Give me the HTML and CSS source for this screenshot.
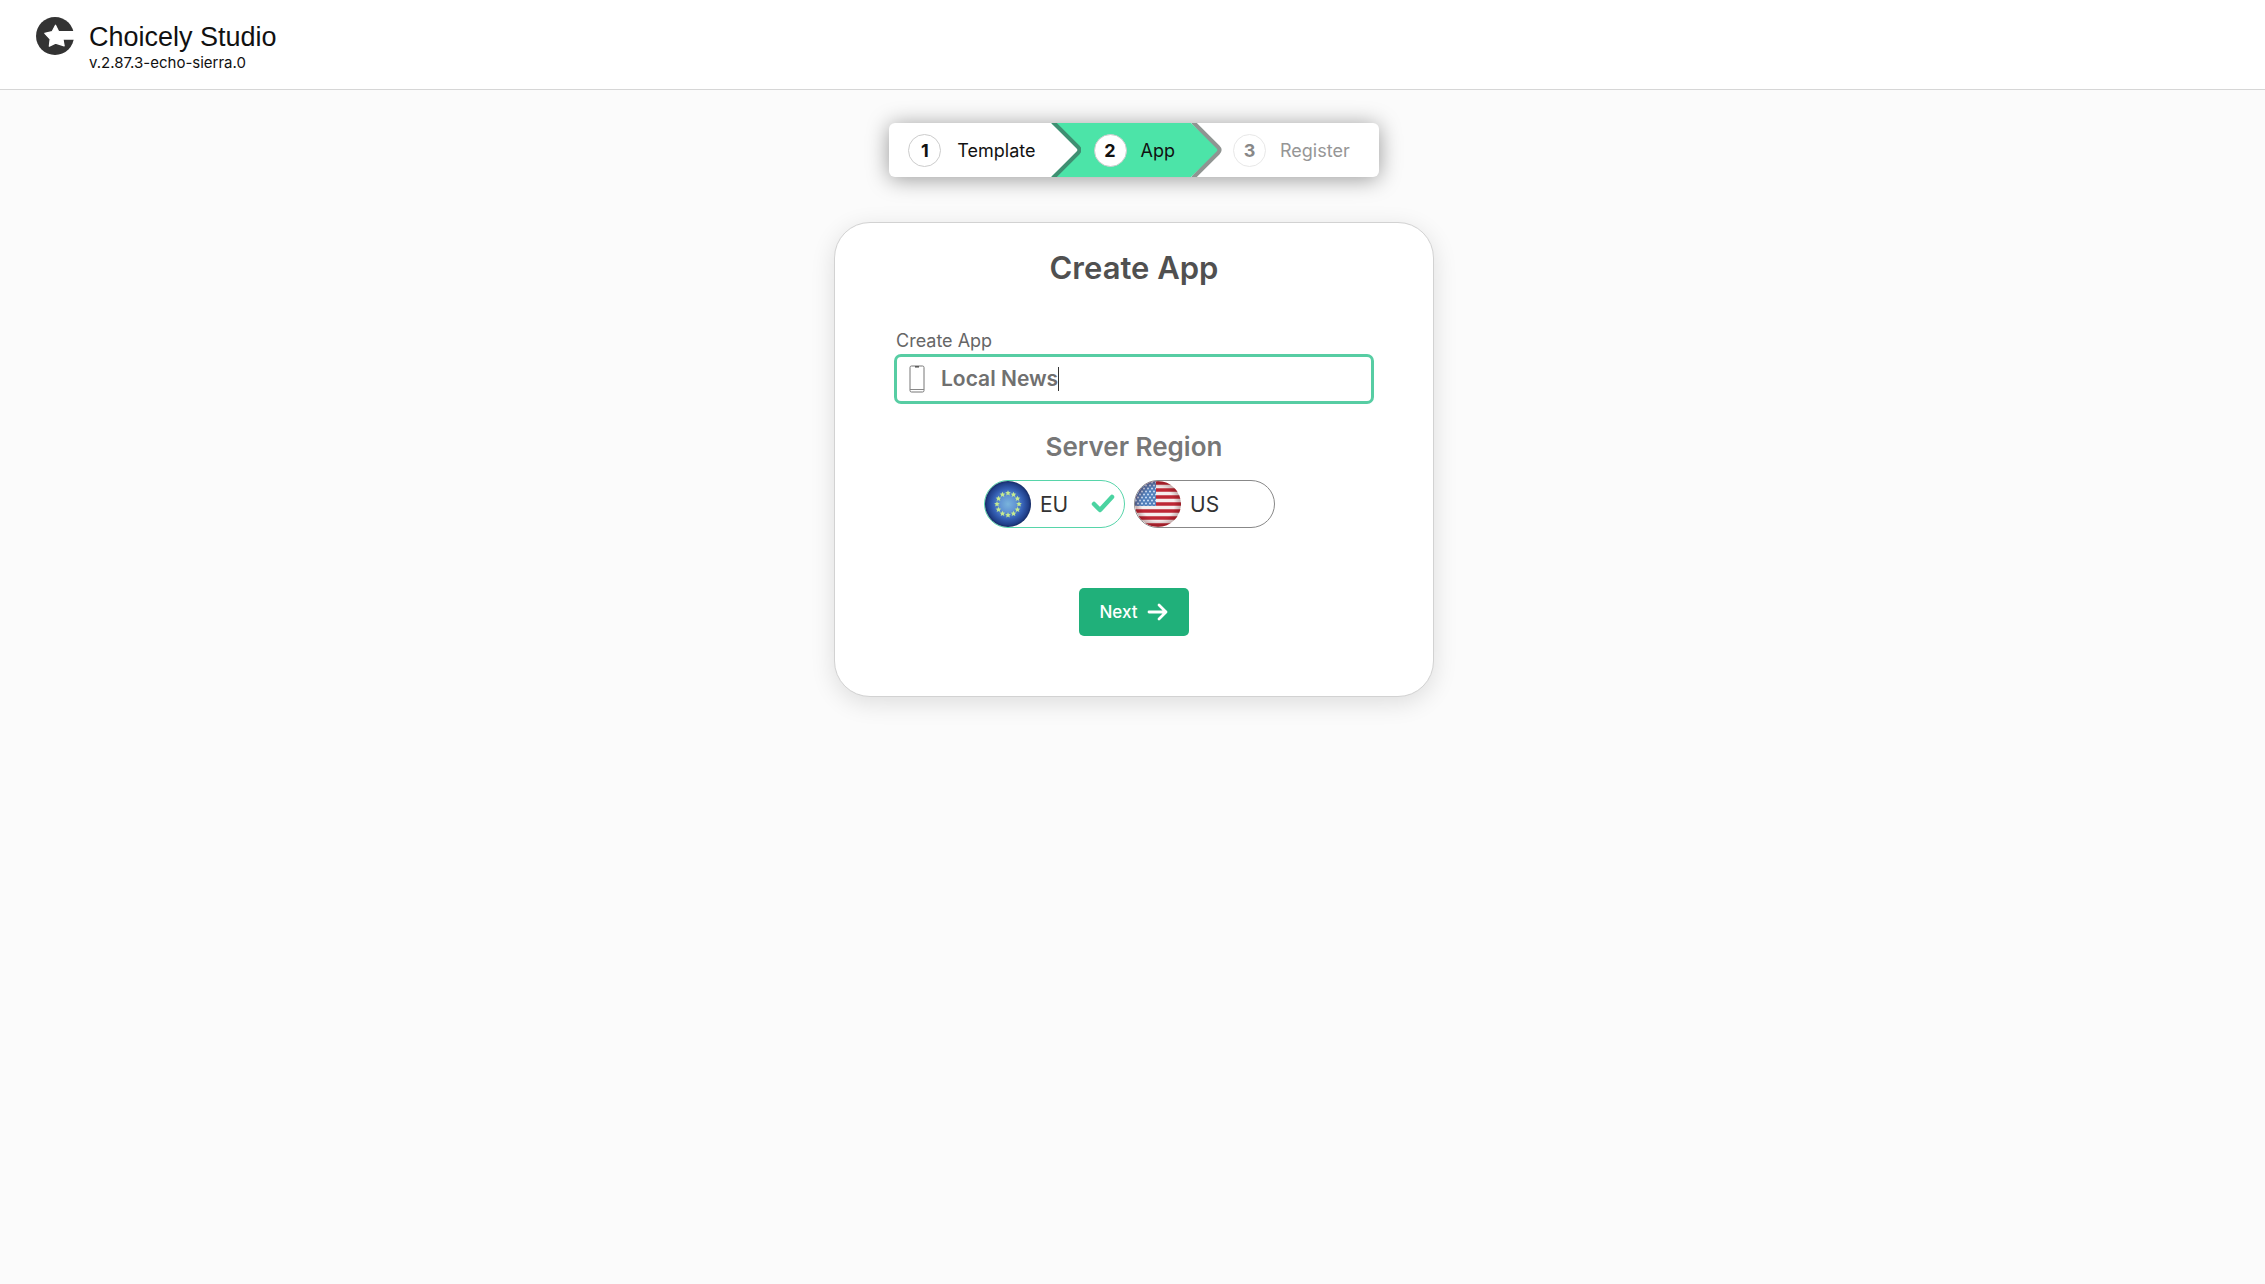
FILE: index.html
```html
<!DOCTYPE html>
<html lang="en">
<head>
  <meta charset="UTF-8">
  <meta name="viewport" content="width=device-width, initial-scale=1.0">
  <title>Choicely Studio</title>
  <link rel="stylesheet" href="styles.css">
</head>
<body>
  <header class="topbar">
    <svg class="logo" viewBox="0 0 37 37" aria-hidden="true">
      <circle cx="18.500" cy="18.500" r="18.500" fill="#333"/>
      <path d="M19 8l3 6.200H37v7.300H26.200l1.200 6.600-8.400-2.700-6 3 .800-7-5.200-5.600 7.200-1.600z" fill="#fff" stroke="#fff" stroke-width="1.200" stroke-linejoin="round"/>
    </svg>
    <div class="brand">
      <div class="brand-name">Choicely Studio</div>
      <div class="version">v.2.87.3-echo-sierra.0</div>
    </div>
  </header>

  <main>
    <ol class="steps">
      <li class="step">
        <span class="step-number">1</span>
        <span>Template</span>
      </li>
      <li class="arrow arrow-first" aria-hidden="true">
        <svg viewBox="0 0 32 54">
          <path d="M0 0L26 24Q29 27 26 30L0 54z" fill="#fff"/>
          <path d="M2 -1L27 24Q30 27 27 30L2 55" fill="none" stroke="#3f8f72" stroke-width="4"/>
        </svg>
      </li>
      <li class="step step-active">
        <span class="step-number">2</span>
        <span>App</span>
      </li>
      <li class="arrow" aria-hidden="true">
        <svg viewBox="0 0 32 54">
          <path d="M0 0L26 24Q29 27 26 30L0 54z" fill="#4ce4a8"/>
          <path d="M2 -1L27 24Q30 27 27 30L2 55" fill="none" stroke="#8f9592" stroke-width="4"/>
        </svg>
      </li>
      <li class="step step-disabled">
        <span class="step-number">3</span>
        <span>Register</span>
      </li>
    </ol>

    <form class="card">
      <h1>Create App</h1>

      <label class="field-label" for="appName">Create App</label>
      <div class="field">
        <svg class="phone-icon" viewBox="0 0 16 28" aria-hidden="true">
          <rect x="1" y="1" width="14" height="26" rx="1.500" fill="none" stroke="#777"/>
          <path d="M6 1.800h4" stroke="#555" stroke-width="1.500"/>
          <path d="M1 24.500h14" stroke="#888"/>
        </svg>
        <input type="text" id="appName" name="appName" value="Local News">
        <span class="caret"></span>
      </div>

      <fieldset class="regions">
        <legend>Server Region</legend>
        <div class="region-list">
          <input type="radio" id="eu" name="region" value="eu" checked>
          <label class="region" for="eu">
            <svg class="flag" viewBox="0 0 46 46" aria-hidden="true">
              <defs>
                <radialGradient id="euBlue">
                  <stop offset="0" stop-color="#79b4dc"/>
                  <stop offset="0.350" stop-color="#6294d3"/>
                  <stop offset="0.650" stop-color="#3661b5"/>
                  <stop offset="0.900" stop-color="#203f89"/>
                  <stop offset="1" stop-color="#142a63"/>
                </radialGradient>
                <path id="star" d="M0-2.800l.800 1.900 2 .100-1.500 1.300.500 2L0 1.400l-1.800 1.100.500-2-1.500-1.300 2-.100z"/>
              </defs>
              <circle cx="23" cy="23" r="23" fill="url(#euBlue)"/>
              <g fill="#c5eb91">
                <use href="#star" x="23" y="12"/>
                <use href="#star" x="28.500" y="13.500"/>
                <use href="#star" x="32.500" y="17.500"/>
                <use href="#star" x="34" y="23"/>
                <use href="#star" x="32.500" y="28.500"/>
                <use href="#star" x="28.500" y="32.500"/>
                <use href="#star" x="23" y="34"/>
                <use href="#star" x="17.500" y="32.500"/>
                <use href="#star" x="13.500" y="28.500"/>
                <use href="#star" x="12" y="23"/>
                <use href="#star" x="13.500" y="17.500"/>
                <use href="#star" x="17.500" y="13.500"/>
              </g>
            </svg>
            <span>EU</span>
            <svg class="check" viewBox="0 0 24 20" aria-hidden="true">
              <path d="M3 10l6 6L21 3" fill="none" stroke="#4bd3a1" stroke-width="4.500" stroke-linecap="round" stroke-linejoin="round"/>
            </svg>
          </label>

          <input type="radio" id="us" name="region" value="us">
          <label class="region" for="us">
            <svg class="flag" viewBox="0 0 46 46" aria-hidden="true">
              <defs>
                <clipPath id="round"><circle cx="23" cy="23" r="23"/></clipPath>
                <radialGradient id="shade">
                  <stop offset="0.700" stop-color="#400" stop-opacity="0"/>
                  <stop offset="1" stop-color="#400" stop-opacity="0.300"/>
                </radialGradient>
                <pattern id="dots" width="4" height="6" patternUnits="userSpaceOnUse">
                  <circle cx="1" cy="1.500" r="0.900" fill="#dcecff"/>
                  <circle cx="3" cy="4.500" r="0.900" fill="#dcecff"/>
                </pattern>
              </defs>
              <g clip-path="url(#round)">
                <rect width="46" height="46" fill="#f6eeee"/>
                <path d="M0 2h46M0 9h46M0 16h46M0 23h46M0 30h46M0 37h46M0 44h46" stroke="#bd2735" stroke-width="3.500"/>
                <rect width="21" height="25" fill="#527fba"/>
                <rect width="21" height="25" fill="url(#dots)"/>
                <circle cx="23" cy="23" r="23" fill="url(#shade)"/>
              </g>
            </svg>
            <span>US</span>
          </label>
        </div>
      </fieldset>

      <button type="submit">
        Next
        <svg class="next-icon" viewBox="0 0 22 20" aria-hidden="true">
          <path d="M2 10h17M12 3l7 7-7 7" fill="none" stroke="#fff" stroke-width="2.800" stroke-linecap="round" stroke-linejoin="round"/>
        </svg>
      </button>
    </form>
  </main>
</body>
</html>
```

FILE: styles.css
```css
* {
  box-sizing: border-box;
}

body {
  margin: 0;
  min-height: 100vh;
  background: #fbfbfb;
  color: #111;
  font-family: Inter, "Liberation Sans", sans-serif;
  font-size: 18px;
}

.topbar {
  display: flex;
  align-items: flex-start;
  gap: 15px;
  height: 90px;
  padding: 17px 36px;
  background: #fff;
  border-bottom: 1px solid #d6d6d6;
}

.logo {
  width: 38px;
  height: 38px;
}

.brand {
  padding-top: 4px;
}

.brand-name {
  font-family: "Liberation Sans", Arial, sans-serif;
  font-size: 27px;
  line-height: 32px;
}

.version {
  font-size: 15px;
  line-height: 20px;
}

main {
  display: flex;
  flex-direction: column;
  align-items: center;
  padding: 33px 16px 33px 19px;
}

.steps {
  display: flex;
  height: 54px;
  margin: 0 0 45px;
  padding: 0;
  list-style: none;
  background: #fff;
  border-radius: 6px;
  box-shadow: 0 2px 22px rgba(0, 0, 0, 0.4);
}

.step {
  display: flex;
  align-items: center;
  gap: 16px;
  padding: 0 15px 0 19px;
}

.step-number {
  display: flex;
  justify-content: center;
  align-items: center;
  width: 33px;
  height: 33px;
  border: 1px solid #ccc;
  border-radius: 50%;
  background: #fff;
  font-weight: 700;
}

.step-active {
  gap: 14px;
  padding: 0 16px 0 13px;
  background: #4ce4a8;
}

.step-disabled {
  gap: 14px;
  padding: 0 29px 0 12px;
  border-radius: 0 6px 6px 0;
  color: #969696;
}

.step-disabled .step-number {
  border-color: #e8e8e8;
  color: #888;
}

.arrow {
  width: 30px;
}

.arrow-first {
  background: #4ce4a8;
}

.arrow svg {
  display: block;
  width: 32px;
  height: 54px;
}

.card {
  display: flex;
  flex-direction: column;
  align-items: center;
  width: 100%;
  max-width: 600px;
  padding: 24px 59px 60px;
  background: #fff;
  border: 1px solid #d2d2d2;
  border-radius: 36px;
  box-shadow: 0 6px 24px rgba(0, 0, 0, 0.12);
}

h1 {
  margin: 0 0 39px;
  color: #505050;
  font-size: 31px;
  font-weight: 600;
  line-height: 42px;
}

.field-label {
  align-self: stretch;
  padding-left: 2px;
  color: #666;
  line-height: 26px;
}

.field {
  position: relative;
  display: flex;
  align-items: center;
  gap: 16px;
  width: 100%;
  height: 50px;
  padding: 0 12px;
  border: 3px solid #57cda3;
  border-radius: 7px;
}

.phone-icon {
  width: 16px;
  height: 28px;
}

.field input {
  flex: 1;
  min-width: 0;
  padding: 0;
  border: 0;
  outline: 0;
  background: transparent;
  color: #707070;
  font: 600 21px/28px Inter, "Liberation Sans", sans-serif;
}

/* text cursor at the end of the name */
.caret {
  position: absolute;
  left: 161px;
  width: 1px;
  height: 24px;
  background: #333;
}

.regions {
  min-width: 0;
  margin: 25px 0 60px;
  padding: 0;
  border: 0;
}

.regions legend {
  width: 100%;
  padding: 0;
  color: #777;
  font-size: 26px;
  font-weight: 600;
  line-height: 36px;
  text-align: center;
}

.region-list {
  display: flex;
  padding-top: 15px;
}

.region-list input {
  position: absolute;
  opacity: 0;
}

.region {
  display: flex;
  align-items: center;
  gap: 9px;
  width: 141px;
  height: 48px;
  margin-right: 9px;
  border: 1px solid #888;
  border-radius: 24px;
  color: #333;
  font-size: 21px;
}

.region-list input:checked + .region {
  border-color: #57d5aa;
}

.flag {
  width: 46px;
  height: 46px;
}

.check {
  width: 24px;
  height: 20px;
  margin: 0 9px 0 auto;
}

button {
  display: flex;
  align-items: center;
  gap: 9px;
  height: 48px;
  padding: 0 20px;
  border: 0;
  border-radius: 5px;
  background: #20b07a;
  color: #fff;
  font: 500 17px Inter, "Liberation Sans", sans-serif;
}

.next-icon {
  width: 22px;
  height: 20px;
}
```
